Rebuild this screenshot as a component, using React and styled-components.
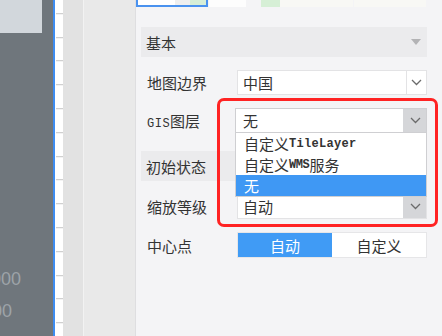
import styled, { createGlobalStyle } from "styled-components";

const GlobalStyle = createGlobalStyle`
  html, body {
    margin: 0;
    padding: 0;
    overflow: hidden;
  }

  body {
    font-family: "Noto Sans CJK SC", "Noto Sans", sans-serif;
    color: #333;
  }
`;

const Page = styled.div`
  display: flex;
  flex-direction: row;

  width: 442px;
  height: 336px;

  overflow: hidden;
`;

const Canvas = styled.div`
  display: flex;
  flex-direction: row;

  width: 136px;
  height: 100%;

  flex-shrink: 0;
`;

const Viewport = styled.div`
  display: flex;
  flex-direction: column;

  width: 53px;
  height: 100%;

  overflow: hidden;

  background-color: #6f767c;
`;

const MiniMap = styled.div`
  width: 42px;
  height: 33px;

  background-color: #d2d7dc;
`;

const AxisLabels = styled.div`
  display: flex;
  flex-direction: column;

  margin-top: auto;
  padding-bottom: 9px;
`;

const AxisLabel = styled.div`
  display: flex;
  justify-content: flex-end;

  padding-right: ${(props) => props.$inset}px;

  font-family: "Liberation Sans", Arial, sans-serif;
  font-size: 18px;
  line-height: 32px;

  color: #9da3a8;
`;

const Strip = styled.div`
  width: ${(props) => props.$width}px;
  height: 100%;

  flex-shrink: 0;

  background-color: ${(props) => props.$color};
`;

const Ruler = styled.div`
  width: 8px;
  height: 100%;

  flex-shrink: 0;

  background-color: #fff;
  background-image: repeating-linear-gradient(
    to bottom,
    transparent 0,
    transparent 22.8px,
    #c4c4c4 22.8px,
    #c4c4c4 23.8px
  );
  background-position: 1px -9.8px;
  background-repeat: repeat-y;
`;

const Panel = styled.div`
  position: relative;

  display: flex;
  flex-direction: column;

  flex: 1;
  height: 100%;

  background-color: #f4f4f6;
`;

const ThumbRow = styled.div`
  display: flex;
  flex-direction: row;

  height: 7px;
`;

const Thumb = styled.div`
  box-sizing: border-box;

  width: ${(props) => props.$width}px;
  height: 100%;

  margin-left: ${(props) => props.$gap || 0}px;

  border: ${(props) => (props.$active ? "2px solid #4a92ef" : "none")};
  border-top: none;

  background: ${(props) => props.$fill};
`;

const Form = styled.div`
  display: flex;
  flex-direction: column;

  padding: 20px 15px 0 5px;
`;

const SectionHeader = styled.div`
  display: flex;
  align-items: center;
  justify-content: space-between;

  height: 30px;

  margin-bottom: ${(props) => props.$after}px;
  padding: 0 6px 0 5px;

  font-size: 15px;

  background-color: #ebebed;
`;

const Caret = styled.span`
  width: 0;
  height: 0;

  border-left: 5px solid transparent;
  border-right: 5px solid transparent;
  border-top: 6px solid #b3b3b5;
`;

const Row = styled.div`
  display: grid;
  grid-template-columns: 96px 1fr;
  align-items: center;

  height: ${(props) => props.$height || 25}px;

  margin-bottom: ${(props) => props.$after}px;
`;

const Label = styled.div`
  padding-left: 6px;

  font-size: 15px;
  white-space: nowrap;
`;

const Latin = styled.span`
  font-family: "Liberation Mono", "DejaVu Sans Mono", monospace;
  font-size: 12px;
  font-weight: ${(props) => (props.$bold ? "bold" : "normal")};
  letter-spacing: ${(props) => props.$spacing || 0}px;
`;

const Control = styled.div`
  position: relative;

  height: 100%;

  margin-left: ${(props) => (props.$open ? -2 : 0)}px;
`;

const SelectBox = styled.div`
  box-sizing: border-box;

  display: flex;
  flex-direction: row;

  height: 100%;

  border: 1px solid ${(props) => (props.$open ? "#cfcfd2" : "#e3e3e5")};

  background-color: #fff;
`;

const SelectValue = styled.div`
  display: flex;
  align-items: center;

  flex: 1;

  padding-left: ${(props) => (props.$open ? 7 : 5)}px;

  font-size: 15px;
`;

const ArrowBox = styled.div`
  display: flex;
  align-items: center;
  justify-content: center;

  width: ${(props) => (props.$shaded ? 22 : 19)}px;

  border-left: 1px solid ${(props) => (props.$shaded ? "#d5d6d9" : "#e3e3e5")};

  background-color: ${(props) => (props.$shaded ? "#d5d6d9" : "#fff")};
`;

const Menu = styled.div`
  position: absolute;
  top: 100%;
  left: 0;
  right: 0;

  z-index: 2;

  box-sizing: border-box;

  display: flex;
  flex-direction: column;

  border: 1px solid #cfcfd2;
  border-top: none;

  background-color: #fff;
`;

const MenuItem = styled.div`
  display: flex;
  align-items: center;

  height: 21px;

  padding-left: 8px;

  font-size: 15px;

  color: ${(props) => (props.$selected ? "#fff" : "#333")};
  background-color: ${(props) => (props.$selected ? "#3f98f4" : "transparent")};
`;

const Highlight = styled.div`
  position: absolute;
  top: 98px;
  left: 81px;

  z-index: 3;

  box-sizing: border-box;

  width: 221px;
  height: 129px;

  border: 3px solid #ff2323;
  border-radius: 7px;

  pointer-events: none;
`;

const Toggle = styled.div`
  box-sizing: border-box;

  display: grid;
  grid-template-columns: 1fr 1fr;

  height: 100%;

  border: 1px solid #e6e6e8;

  background-color: #fff;
`;

const ToggleOption = styled.div`
  display: flex;
  align-items: center;
  justify-content: center;

  font-size: 15px;

  color: ${(props) => (props.$active ? "#fff" : "#333")};
  background-color: ${(props) => (props.$active ? "#409bf5" : "transparent")};
`;

function Chevron() {
  return (
    <svg width="11" height="7" viewBox="0 0 11 7">
      <path
        d="M1 1 L5.5 5.5 L10 1"
        fill="none"
        stroke="#6b6b6b"
        strokeWidth="1.3"
      />
    </svg>
  );
}

function Select({ value, open, shaded, children }) {
  return (
    <Control $open={open}>
      <SelectBox $open={open}>
        <SelectValue $open={open}>{value}</SelectValue>
        <ArrowBox $shaded={shaded}>
          <Chevron />
        </ArrowBox>
      </SelectBox>
      {children}
    </Control>
  );
}

function App() {
  return (
    <Page>
      <GlobalStyle />
      <Canvas>
        <Viewport>
          <MiniMap />
          <AxisLabels>
            <AxisLabel $inset={32}>000</AxisLabel>
            <AxisLabel $inset={41}>00</AxisLabel>
          </AxisLabels>
        </Viewport>
        <Strip $width={2} $color="#3e8cf0" />
        <Ruler />
        <Strip $width={20} $color="#e2e2e2" />
        <Strip $width={1} $color="#f2f2f2" />
        <Strip $width={51} $color="#e9e9e9" />
        <Strip $width={1} $color="#dedee0" />
      </Canvas>

      <Panel>
        <ThumbRow>
          <Thumb
            $width={72}
            $active
            $fill="linear-gradient(to right, #fff 0 37px, #efefef 37px 52px, #d6eed7 52px 68px)"
          />
          <Thumb $width={37} $gap={1} $fill="#fdfdfd" />
          <Thumb
            $width={92}
            $gap={15}
            $fill="linear-gradient(to right, #d6efd6 0 19px, #f8f8f5 19px)"
          />
          <Thumb $width={72} $gap={1} $fill="#f8f8f5" />
        </ThumbRow>

        <Form>
          <SectionHeader $after={13}>
            基本
            <Caret />
          </SectionHeader>

          <Row $after={13}>
            <Label>地图边界</Label>
            <Select value="中国" />
          </Row>

          <Row $after={18}>
            <Label>
              <Latin $spacing={0.5}>GIS</Latin>图层
            </Label>
            <Select value="无" open shaded>
              <Menu>
                <MenuItem>
                  自定义<Latin $bold $spacing={0.3}>TileLayer</Latin>
                </MenuItem>
                <MenuItem>
                  自定义<Latin $bold $spacing={-0.4}>WMS</Latin>服务
                </MenuItem>
                <MenuItem $selected>无</MenuItem>
              </Menu>
            </Select>
          </Row>

          <SectionHeader $after={13}>
            初始状态
            <Caret />
          </SectionHeader>

          <Row $after={13}>
            <Label>缩放等级</Label>
            <Select value="自动" shaded />
          </Row>

          <Row $height={26}>
            <Label>中心点</Label>
            <Toggle>
              <ToggleOption $active>自动</ToggleOption>
              <ToggleOption>自定义</ToggleOption>
            </Toggle>
          </Row>
        </Form>

        <Highlight />
      </Panel>
    </Page>
  );
}

export default App;
